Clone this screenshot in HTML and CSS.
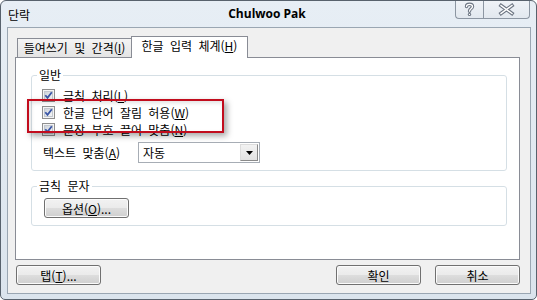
FILE: index.html
```html
<!DOCTYPE html>
<html lang="ko">
<head>
<meta charset="utf-8">
<title>단락</title>
<link rel="stylesheet" href="styles.css">
</head>
<body>
<div class="window">
  <div class="titlebar">
    <span class="title-left">단락</span>
    <span class="title-center">Chulwoo Pak</span>
    <div class="caption">
      <span class="cap-btn help">
        <svg width="27" height="17" viewBox="0 0 27 17">
          <path d="M10.5 5.5 C10.5 2.6 16.5 2.6 16.5 5.5 C16.5 7.8 13.5 7.6 13.5 10.2" fill="none" stroke="#6e7784" stroke-width="3.4" stroke-linecap="round"/>
          <circle cx="13.5" cy="13.4" r="1.7" fill="#6e7784"/>
          <path d="M10.5 5.5 C10.5 2.6 16.5 2.6 16.5 5.5 C16.5 7.8 13.5 7.6 13.5 10.2" fill="none" stroke="#ffffff" stroke-width="1.3" stroke-linecap="round"/>
          <circle cx="13.5" cy="13.4" r="0.7" fill="#ffffff"/>
        </svg>
      </span>
      <span class="cap-btn close">
        <svg width="45" height="17" viewBox="0 0 45 17">
          <path d="M17 4.5 L28 12.5 M28 4.5 L17 12.5" fill="none" stroke="#6e7784" stroke-width="3.6" stroke-linecap="square"/>
          <path d="M17 4.5 L28 12.5 M28 4.5 L17 12.5" fill="none" stroke="#ffffff" stroke-width="1.4" stroke-linecap="square"/>
        </svg>
      </span>
    </div>
  </div>

  <div class="client">
    <div class="tabs">
      <div class="tab">들여쓰기 및 간격(<u>I</u>)</div>
      <div class="tab active">한글 입력 체계(<u>H</u>)</div>
    </div>

    <div class="panel">
      <fieldset class="group group-general">
        <legend>일반</legend>
        <div class="check-row">
          <span class="cb"><svg width="13" height="13" viewBox="0 0 13 13"><defs><linearGradient id="cbg" x1="0" y1="0" x2="1" y2="1"><stop offset="0" stop-color="#cbd1d9"/><stop offset="1" stop-color="#f8f8f8"/></linearGradient></defs><rect x="0.5" y="0.5" width="12" height="12" fill="#f4f4f4" stroke="#8f8f8f"/><rect x="2.5" y="2.5" width="8" height="8" fill="url(#cbg)" stroke="#c2c7ce"/><path d="M3.3 6.2 L5.5 8.9 L9.8 3.2" fill="none" stroke="#3a56a6" stroke-width="1.8"/></svg></span>
          <span>금칙 처리(<u>L</u>)</span>
        </div>
        <div class="check-row">
          <span class="cb"><svg width="13" height="13" viewBox="0 0 13 13"><rect x="0.5" y="0.5" width="12" height="12" fill="#f4f4f4" stroke="#8f8f8f"/><rect x="2.5" y="2.5" width="8" height="8" fill="url(#cbg)" stroke="#c2c7ce"/><path d="M3.3 6.2 L5.5 8.9 L9.8 3.2" fill="none" stroke="#3a56a6" stroke-width="1.8"/></svg></span>
          <span>한글 단어 잘림 허용(<u>W</u>)</span>
        </div>
        <div class="check-row">
          <span class="cb"><svg width="13" height="13" viewBox="0 0 13 13"><rect x="0.5" y="0.5" width="12" height="12" fill="#f4f4f4" stroke="#8f8f8f"/><rect x="2.5" y="2.5" width="8" height="8" fill="url(#cbg)" stroke="#c2c7ce"/><path d="M3.3 6.2 L5.5 8.9 L9.8 3.2" fill="none" stroke="#3a56a6" stroke-width="1.8"/></svg></span>
          <span>문장 부호 끌어 맞춤(<u>N</u>)</span>
        </div>
        <div class="combo-row">
          <span class="combo-label">텍스트 맞춤(<u>A</u>)</span>
          <div class="combo">
            <span class="combo-value">자동</span>
            <span class="combo-btn"><svg width="7" height="4" viewBox="0 0 7 4"><path d="M0 0 H7 L3.5 4 Z" fill="#000"/></svg></span>
          </div>
        </div>
      </fieldset>

      <fieldset class="group group-chars">
        <legend>금칙 문자</legend>
        <button class="btn btn-option">옵션(<u>O</u>)...</button>
      </fieldset>
    </div>

    <div class="bottom">
      <button class="btn">탭(<u>T</u>)...</button>
      <span class="spacer"></span>
      <button class="btn">확인</button>
      <button class="btn">취소</button>
    </div>
  </div>

  <div class="annotation"></div>
</div>
</body>
</html>
```

FILE: styles.css
```css
html, body {
  margin: 0;
  padding: 0;
  background: #ffffff;
}

body {
  font-family: "Noto Sans CJK KR", "Noto Sans", sans-serif;
  font-size: 12px;
  color: #000000;
}

.window {
  position: relative;
  width: 537px;
  height: 300px;
  box-sizing: border-box;
  border: 1px solid #58626d;
  border-radius: 6px 6px 5px 5px;
  background: linear-gradient(#e7eef5, #dbe4ed);
  padding: 0 5px 5px 6px;
  display: flex;
  flex-direction: column;
  overflow: hidden;
}

.titlebar {
  height: 26px;
  display: grid;
  grid-template-columns: 1fr auto 1fr;
  align-items: center;
  padding: 0 1px;
}

.title-left {
  font-size: 12px;
  line-height: 16px;
  margin-top: 1px;
}

.title-center {
  font-family: "Open Sans", "Liberation Sans", sans-serif;
  font-weight: bold;
  font-size: 12px;
  line-height: 16px;
  margin-left: -4px;
}

.caption {
  justify-self: end;
  align-self: start;
  display: flex;
  height: 18px;
}

.cap-btn {
  display: block;
  height: 18px;
  box-sizing: border-box;
  border: 1px solid #8c96a2;
  border-top: none;
  background: linear-gradient(#eff3f7, #e2e8ef);
}

.cap-btn svg {
  display: block;
}

.help {
  width: 28px;
  border-right: none;
  border-radius: 0 0 0 4px;
}

.close {
  width: 47px;
  border-radius: 0 0 4px 0;
}

.client {
  height: 267px;
  box-sizing: border-box;
  border: 1px solid #9aa6b2;
  background: #f0f0f0;
  padding-top: 8px;
  display: flex;
  flex-direction: column;
}

.tabs {
  display: flex;
  align-items: flex-end;
  height: 21px;
  margin-left: 9px;
}

.tab {
  box-sizing: border-box;
  width: 115px;
  height: 19px;
  border: 1px solid #898c95;
  border-bottom: none;
  background: linear-gradient(#f4f4f4, #e4e4e4);
  display: flex;
  align-items: center;
  justify-content: center;
  line-height: 16px;
  word-spacing: 3px;
  white-space: nowrap;
}

.tab.active {
  width: 117px;
  height: 22px;
  margin-left: -1px;
  margin-bottom: -1px;
  padding-bottom: 3px;
  background: #ffffff;
  position: relative;
  z-index: 1;
}

.panel {
  margin: 0 10px 0 7px;
  height: 203px;
  box-sizing: border-box;
  border: 1px solid #898c95;
  background: #ffffff;
  padding: 0 12px 0 15px;
}

.group {
  margin: 9px 0 0;
  padding: 4px 0 7px 0;
  border: 1px solid #d5dfe5;
  border-radius: 3px;
  min-width: 0;
}

.group legend {
  margin-left: 5px;
  padding: 0 2px;
  line-height: 16px;
  height: 16px;
  word-spacing: 3px;
}

.group-chars {
  margin-top: 7px;
}

.check-row {
  display: flex;
  align-items: center;
  gap: 8px;
  height: 17px;
  margin-left: 10px;
  line-height: 17px;
  word-spacing: 3px;
  white-space: nowrap;
}

.cb {
  display: block;
  width: 13px;
  height: 13px;
}

.cb svg {
  display: block;
}

.combo-row {
  display: flex;
  align-items: center;
  margin: 4px 0 0 11px;
  height: 21px;
}

.combo-label {
  width: 95px;
  word-spacing: 3px;
  white-space: nowrap;
  line-height: 17px;
}

.combo {
  width: 122px;
  height: 21px;
  box-sizing: border-box;
  border: 1px solid #a7adb5;
  background: #ffffff;
  display: flex;
  align-items: center;
}

.combo-value {
  padding-left: 4px;
  line-height: 17px;
}

.combo-btn {
  margin-left: auto;
  margin-right: 1px;
  width: 18px;
  height: 17px;
  box-sizing: border-box;
  border: 1px solid #dcdcdc;
  border-right-color: #8a8a8a;
  border-bottom-color: #8a8a8a;
  background: linear-gradient(#f2f2f2, #e2e2e2);
  display: flex;
  align-items: center;
  justify-content: center;
}

.combo-btn svg {
  display: block;
}

.btn {
  width: 85px;
  height: 20px;
  box-sizing: border-box;
  padding: 0;
  margin: 0;
  border: 1px solid #707070;
  border-radius: 3px;
  background: linear-gradient(#f2f2f2 0%, #ebebeb 48%, #dddddd 52%, #cfcfcf 100%);
  box-shadow: inset 0 0 0 1px #fbfbfb;
  font-family: "Noto Sans CJK KR", "Noto Sans", sans-serif;
  font-size: 12px;
  line-height: 17px;
  color: #000000;
  text-align: center;
}

.btn-option {
  display: block;
  margin-left: 12px;
}

.bottom {
  display: flex;
  align-items: center;
  margin-top: 5px;
  padding: 0 10px 0 8px;
  gap: 14px;
}

.spacer {
  flex: 1;
}

.annotation {
  position: absolute;
  left: 26px;
  top: 98px;
  width: 197px;
  height: 34px;
  box-sizing: border-box;
  border: 2px solid #c20c1d;
  box-shadow: 3px 3px 6px rgba(0, 0, 0, 0.35), inset 2px 2px 4px rgba(0, 0, 0, 0.12);
  pointer-events: none;
}
```
